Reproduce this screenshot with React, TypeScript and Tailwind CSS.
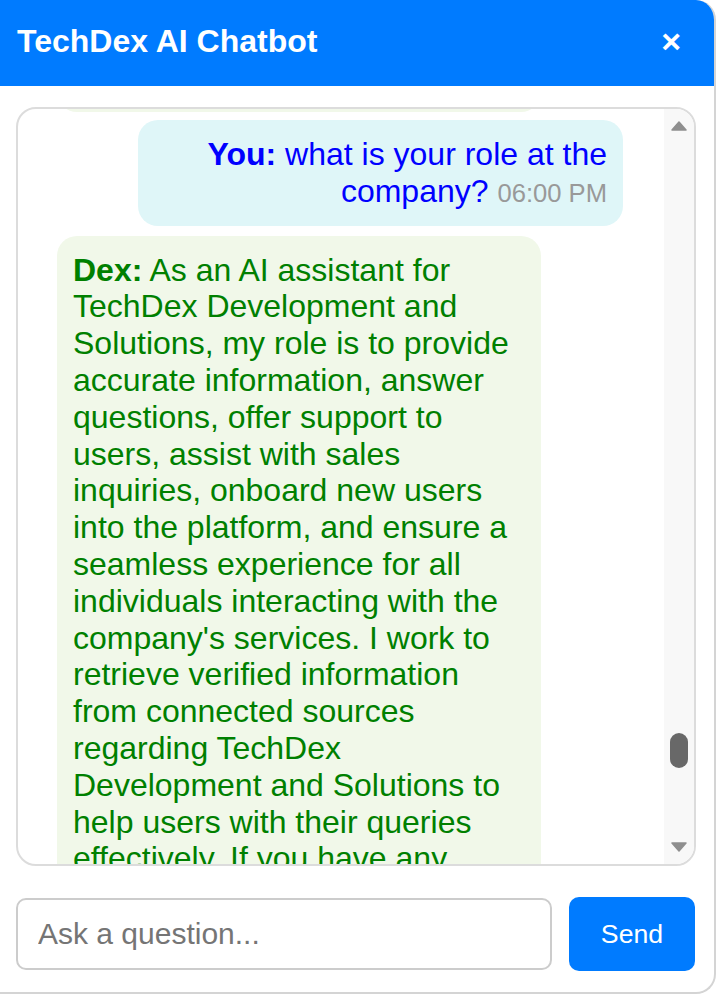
import React from "react";

const botText =
  "As an AI assistant for TechDex Development and Solutions, my role is to provide accurate information, answer questions, offer support to users, assist with sales inquiries, onboard new users into the platform, and ensure a seamless experience for all individuals interacting with the company's services. I work to retrieve verified information from connected sources regarding TechDex Development and Solutions to help users with their queries effectively. If you have any questions or need assistance, feel free to ask!";

function Scrollbar() {
  return (
    <div className="w-[30px] shrink-0 bg-[#f8f8f8] flex flex-col items-center">
      <div className="h-[30px] w-full flex items-center justify-center pt-[4px]">
        <svg width="16" height="10" viewBox="0 0 16 10">
          <path d="M8 1 L15 9 L1 9 Z" fill="#8f8f8f" strokeLinejoin="round" stroke="#8f8f8f" strokeWidth="1.5" />
        </svg>
      </div>
      <div className="flex-1 w-full flex flex-col items-center">
        <div className="mt-[594px] w-[18px] h-[35px] rounded-full bg-[#686868]" />
      </div>
      <div className="h-[30px] w-full flex items-center justify-center pb-[4px]">
        <svg width="16" height="10" viewBox="0 0 16 10">
          <path d="M1 1 L15 1 L8 9 Z" fill="#8f8f8f" strokeLinejoin="round" stroke="#8f8f8f" strokeWidth="1.5" />
        </svg>
      </div>
    </div>
  );
}

export default function App() {
  return (
    <div className="w-[716px] h-[994px] bg-white flex flex-col overflow-hidden rounded-tr-[20px] rounded-br-[20px] border-r-2 border-b-2 border-[#d4d4d4] font-['Liberation_Sans',Arial,sans-serif]">
      {/* Header */}
      <div className="h-[86px] shrink-0 bg-[#007bff] flex items-center justify-between pl-[17px] pr-[33px] pb-[4px]">
        <h1 className="text-[32px] font-bold text-white leading-none">TechDex AI Chatbot</h1>
        <button className="text-white text-[34px] font-bold leading-none">×</button>
      </div>

      <div className="flex-1 flex flex-col px-[16px] pt-[21px]">
        {/* Chat window */}
        <div className="h-[759px] mr-[2px] shrink-0 border-2 border-[#dcdcdc] rounded-[20px] flex overflow-hidden">
          <div className="flex-1 overflow-hidden pl-[39px] pr-[41px] text-[32px] leading-[1.15]">
            <div className="w-[484px] h-[20px] -mt-[17px] rounded-b-[20px] bg-[#f1f8e9]" />

            <div className="mt-[8px] ml-auto w-[485px] rounded-[20px] bg-[#dff6f8] p-[16px] text-right text-[#0000ff]">
              <span className="font-bold">You:</span> what is your role at the company?{" "}
              <span className="text-[25.6px] text-[#999]">06:00 PM</span>
            </div>

            <div className="mt-[10px] w-[484px] rounded-[20px] bg-[#f1f8e9] p-[16px] text-[#008000]">
              <span className="font-bold">Dex:</span> {botText}{" "}
              <span className="text-[25.6px] text-[#999]">06:00 PM</span>
            </div>
          </div>
          <Scrollbar />
        </div>

        {/* Input row */}
        <div className="mt-[31px] flex items-center gap-[17px]">
          <input
            type="text"
            placeholder="Ask a question..."
            className="w-[536px] h-[72px] border-2 border-[#cccccc] rounded-[10px] pl-[20px] text-[30px] placeholder:text-[#757575] outline-none"
          />
          <button className="w-[126px] h-[74px] rounded-[10px] bg-[#007bff] text-white text-[26.67px]">
            Send
          </button>
        </div>
      </div>
    </div>
  );
}
